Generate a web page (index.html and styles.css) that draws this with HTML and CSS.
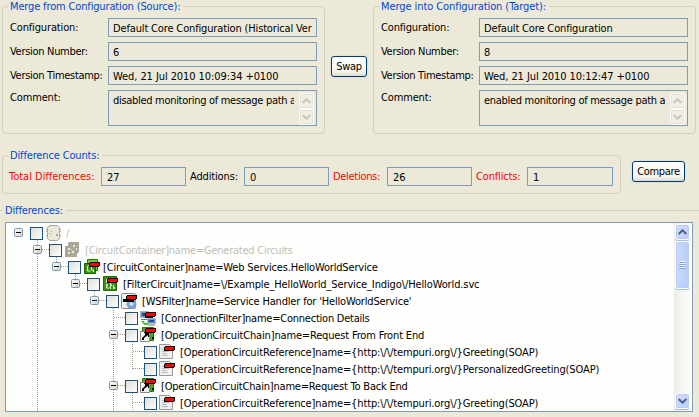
FILE: index.html
```
<!DOCTYPE html>
<html lang="en">
<head>
<meta charset="utf-8">
<title>Compare Configurations</title>
<link rel="stylesheet" href="styles.css">
</head>
<body>
<svg width="0" height="0" class="defs">
  <defs>
    <linearGradient id="face" x1="0" y1="0" x2="1" y2="1"><stop offset="0" stop-color="#fff"/><stop offset="1" stop-color="#d3cfc2"/></linearGradient>
    <linearGradient id="box" x1="0" y1="0" x2="1" y2="1"><stop offset="0" stop-color="#dcdcd7"/><stop offset="1" stop-color="#fff"/></linearGradient>
    <symbol id="minus" viewBox="0 0 9 9"><rect x=".5" y=".5" width="8" height="8" rx="1" fill="url(#face)" stroke="#7898b5"/><path d="M2 4.5h5" stroke="#000"/></symbol>
    <symbol id="check" viewBox="0 0 13 13"><rect x=".5" y=".5" width="12" height="12" fill="url(#box)" stroke="#1c5180"/></symbol>
    <symbol id="bar" viewBox="0 0 11 5"><path d="M1 0h10v4h-1v1h-10v-4h1z" fill="#000"/><path d="M1 1h9v3h-9z" fill="#f00"/></symbol>
    <symbol id="root" viewBox="0 0 16 16"><path d="M3.500 .5h8l2 2v11l-2 2h-8l-2-2v-11z" fill="#ece7d9" stroke="#aca899"/><path d="M0 4h1v1H0zM0 6h1v1H0zM0 10h1v1H0zM14 4h1v1h-1zM14 6h1v1h-1zM14 10h1v1h-1zM3 8h1v1H3zM5 6h1v1H5zM10 9h2v2h-2zM5 9h1v1H5z" fill="#aca899"/></symbol>
    <symbol id="dim" viewBox="0 0 16 16"><path d="M4 0h10v10l-2 2v3H0V4h3V1z" fill="#aca899"/><path d="M3 6h2v2H3zM8 3h2v2H8zM3 10h2v2H3zM7 9h2v2H7zM11 6h1v2h-1zM6 7h1v1H6z" fill="#ece9d8"/></symbol>
    <symbol id="circuits" viewBox="0 0 16 16"><path d="M3.500 .5h10v11h-10z" fill="#66cf28" stroke="#277900"/><path d="M.5 4.500h11v10H.5z" fill="#399116" stroke="#176000"/><path d="M3.500 7v5h3M7.500 8v3h2v2M4 6.500h2" fill="none" stroke="#d6f1c7"/><use href="#bar" x="5" y="3" width="11" height="5"/></symbol>
    <symbol id="circuit" viewBox="0 0 16 16"><path d="M.5 .5h13v14H.5z" fill="#3a8f16" stroke="#226900"/><path d="M3.500 4v3M3.500 9v3h3M7.500 5v8M10.500 9v4" fill="none" stroke="#d6f1c7"/><path d="M3 3h2v2H3zM3 8h2v2H3zM7 8h2v2H7zM10 11h2v2h-2z" fill="#c4e9ae"/><use href="#bar" x="4" y="2" width="11" height="5"/></symbol>
    <symbol id="ws" viewBox="0 0 16 16"><rect x=".5" y=".5" width="14" height="15" rx="1" fill="#eee" stroke="#888"/><path d="M3 3h8v3H3z" fill="#fff"/><circle cx="10.500" cy="11" r="4.500" fill="#7da7df" stroke="#6d93cc" stroke-dasharray="2 1"/><circle cx="10.500" cy="11" r="1.800" fill="#d7e7fa"/><path d="M2 6h11v3H2z" fill="#000"/><use href="#bar" x="5" y="2" width="11" height="5"/></symbol>
    <symbol id="conn" viewBox="0 0 16 16"><path d="M.5 1.500h8v6h-8zM7.500 8.500h8v5h-8z" fill="#629bdc" stroke="#aab2bb"/><path d="M2 3h4v3H2zM9 10h5v2H9z" fill="#294a93"/><path d="M1 9.500h6M8 15h7" fill="none" stroke="#6e7a82"/><path d="M1 11l3 4h4v-2H5l-1-2z" fill="#4ac733"/><path d="M5 6h8v2H5z" fill="#111"/><use href="#bar" x="5" y="2" width="11" height="5"/></symbol>
    <symbol id="chain" viewBox="0 0 16 16"><path d="M2.500 .5h11v13h-11z" fill="#4b9d27" stroke="#287400"/><path d="M.5 4.500h9v10h-9z" fill="#f2f2f2" stroke="#888"/><path d="M2 13v-2l3-3V6H4V5h5v5H8V8l-4 3v2zM12 10h2v2h-2z" fill="#000"/><use href="#bar" x="5" y="1" width="11" height="5"/></symbol>
    <symbol id="ref" viewBox="0 0 16 16"><path d="M.5 .5h10l3 3v11H.5z" fill="#f0f0ef" stroke="#999"/><path d="M3 5.500h5M3 7.500h7M3 9.500h5M3 11.500h6" stroke="#bbb"/><use href="#bar" x="5" y="2" width="11" height="5"/></symbol>
    <symbol id="up" viewBox="0 0 9 6"><path d="M.7 5L4.500 1.300 8.300 5" fill="none" stroke="currentColor" stroke-width="2"/></symbol>
    <symbol id="down" viewBox="0 0 9 6"><path d="M.7 1L4.500 4.700 8.300 1" fill="none" stroke="currentColor" stroke-width="2"/></symbol>
  </defs>
</svg>
<main>
  <section class="merge">
    <fieldset class="group config">
      <legend>Merge from Configuration (Source):</legend>
      <label>Configuration:</label><div class="field">Default Core Configuration (Historical Ver</div>
      <label class="tight">Version Number:</label><div class="field">6</div>
      <label class="tight">Version Timestamp:</label><div class="field date">Wed, 21 Jul 2010 10:09:34 +0100</div>
      <label class="top">Comment:</label>
      <div class="field area"><span>disabled monitoring of message path a</span><div class="mini"><i><svg><use href="#up"/></svg></i><i><svg><use href="#down"/></svg></i></div></div>
    </fieldset>
    <button class="swap">Swap</button>
    <fieldset class="group config">
      <legend class="wide">Merge into Configuration (Target):</legend>
      <label>Configuration:</label><div class="field">Default Core Configuration</div>
      <label class="tight">Version Number:</label><div class="field">8</div>
      <label class="tight">Version Timestamp:</label><div class="field date">Wed, 21 Jul 2010 10:12:47 +0100</div>
      <label class="top">Comment:</label>
      <div class="field area"><span>enabled monitoring of message path a</span><div class="mini"><i><svg><use href="#up"/></svg></i><i><svg><use href="#down"/></svg></i></div></div>
    </fieldset>
  </section>
  <section class="summary">
    <fieldset class="group counts">
      <legend>Difference Counts:</legend>
      <label class="red total">Total Differences:</label><div class="field">27</div>
      <label>Additions:</label><div class="field">0</div>
      <label class="red tight">Deletions:</label><div class="field">26</div>
      <label class="red">Conflicts:</label><div class="field">1</div>
    </fieldset>
    <button class="compare">Compare</button>
  </section>
  <fieldset class="diffs">
    <legend>Differences:</legend>
    <div class="tree">
      <svg class="lines" width="180" height="188"><path d="M31.500 17V188M50.500 34V47M69.500 51V64M88.500 68V81M107.500 85V188M126.500 119V146M126.500 170V188M36 26.500H43M55 43.500H62M74 60.500H81M93 77.500H100M108 94.500H119M112 111.500H119M127 128.500H138M127 145.500H138M112 162.500H119M127 179.500H138"/></svg>
      <div class="rows">
        <div class="row d0"><svg class="exp"><use href="#minus"/></svg><svg class="chk"><use href="#check"/></svg><svg class="ico"><use href="#root"/></svg><span class="dim">/</span></div>
        <div class="row d1"><svg class="exp"><use href="#minus"/></svg><svg class="chk"><use href="#check"/></svg><svg class="ico"><use href="#dim"/></svg><span class="dim">[CircuitContainer]name=Generated Circuits</span></div>
        <div class="row d2"><svg class="exp"><use href="#minus"/></svg><svg class="chk"><use href="#check"/></svg><svg class="ico"><use href="#circuits"/></svg><span>[CircuitContainer]name=Web Services.HelloWorldService</span></div>
        <div class="row d3"><svg class="exp"><use href="#minus"/></svg><svg class="chk"><use href="#check"/></svg><svg class="ico"><use href="#circuit"/></svg><span>[FilterCircuit]name=\/Example_HelloWorld_Service_Indigo\/HelloWorld.svc</span></div>
        <div class="row d4"><svg class="exp"><use href="#minus"/></svg><svg class="chk"><use href="#check"/></svg><svg class="ico"><use href="#ws"/></svg><span>[WSFilter]name=Service Handler for 'HelloWorldService'</span></div>
        <div class="row d5 leaf"><svg class="chk"><use href="#check"/></svg><svg class="ico"><use href="#conn"/></svg><span>[ConnectionFilter]name=Connection Details</span></div>
        <div class="row d5"><svg class="exp"><use href="#minus"/></svg><svg class="chk"><use href="#check"/></svg><svg class="ico"><use href="#chain"/></svg><span>[OperationCircuitChain]name=Request From Front End</span></div>
        <div class="row d6 leaf"><svg class="chk"><use href="#check"/></svg><svg class="ico"><use href="#ref"/></svg><span>[OperationCircuitReference]name={http:\/\/tempuri.org\/}Greeting(SOAP)</span></div>
        <div class="row d6 leaf"><svg class="chk"><use href="#check"/></svg><svg class="ico"><use href="#ref"/></svg><span>[OperationCircuitReference]name={http:\/\/tempuri.org\/}PersonalizedGreeting(SOAP)</span></div>
        <div class="row d5"><svg class="exp"><use href="#minus"/></svg><svg class="chk"><use href="#check"/></svg><svg class="ico"><use href="#chain"/></svg><span class="back">[OperationCircuitChain]name=Request To Back End</span></div>
        <div class="row d6 leaf"><svg class="chk"><use href="#check"/></svg><svg class="ico"><use href="#ref"/></svg><span>[OperationCircuitReference]name={http:\/\/tempuri.org\/}Greeting(SOAP)</span></div>
      </div>
      <div class="scroll">
        <i class="arrow"><svg><use href="#up"/></svg></i>
        <i class="thumb"><b></b></i>
        <i class="arrow end"><svg><use href="#down"/></svg></i>
      </div>
    </div>
  </fieldset>
</main>
</body>
</html>
```
FILE: styles.css
```
* { box-sizing: border-box; }
body { margin: 0; width: 699px; height: 417px; overflow: hidden; background: #ece9d8; color: #000; font: 11px/13px "DejaVu Sans Condensed", "DejaVu Sans", sans-serif; font-stretch: condensed; letter-spacing: -0.15px; white-space: nowrap; }
.defs { position: absolute; }
main { display: flex; flex-direction: column; height: 417px; }
fieldset { margin: 0; padding: 0; min-width: 0; border: 1px solid #d0d0bf; }
legend { color: #0046d5; margin-left: -2px; padding: 0 3px 0 2px; height: 13px; }
.wide { letter-spacing: -0.08px; }
svg { display: block; flex: none; }

.merge { display: flex; height: 149px; padding-left: 2px; }
.group { border-radius: 4px; }
.config { display: grid; grid-template-columns: 98px 209px; grid-template-rows: 19px 19px 19px 36px; row-gap: 5px; align-items: center; align-content: start; width: 323px; height: 134px; padding: 5px 0 0 7px; }
.tight { letter-spacing: -0.3px; }
.date { letter-spacing: -0.08px; }
.top { align-self: start; margin-top: 1px; }
.field { height: 19px; border: 1px solid #7f9db9; padding: 3px 4px 0 4px; line-height: 13px; overflow: hidden; }
.area { height: 36px; display: flex; padding: 3px 2px 0 4px; letter-spacing: -0.3px; }
.area span { width: 181px; overflow: hidden; }
.mini { display: flex; flex-direction: column; margin: -1px 0 0 auto; }
.mini i { display: grid; place-items: center; width: 15px; height: 16px; background: #f1efe5; border: 1px solid #fff; border-radius: 2px; box-shadow: inset 0 0 0 1px #e5e2d5, 0 1px #ddd9c9; color: #c9c7ba; }
.mini svg, .arrow svg { width: 9px; height: 6px; }

button { border: 1px solid #003c74; border-radius: 3px; padding: 0; height: 21px; font: inherit; letter-spacing: -0.35px; color: #000; background: linear-gradient(#fff, #f4f3ee 80%, #dcd8cb); box-shadow: 0 0 0 1px #e4e0ce; }
.swap { width: 36px; margin: 56px 6px 0; }
.compare { width: 53px; margin: 12px 0 0 11px; }

.summary { display: flex; height: 55px; padding-left: 2px; }
.counts { display: grid; grid-template-columns: 91px 85px 58px 85px 58px 85px 55px 86px; align-items: start; width: 619px; height: 45px; padding: 5px 0 0 7px; }
.counts label { margin-top: 3px; }
.counts label:nth-of-type(n+2) { padding-left: 4px; }
.counts .total { letter-spacing: 0; margin-left: -1px; }
.counts .field { padding-left: 5px; }
.red { color: #f00; }

.diffs { border-width: 1px 0 0; width: 699px; height: 213px; padding: 5px 0 0 5px; }
.tree { position: relative; display: flex; width: 688px; height: 190px; border: 1px solid #7f9db9; background: #fefefc; overflow: hidden; }
.lines { position: absolute; left: 0; top: 0; fill: none; stroke: #a09e90; stroke-dasharray: 1 1; }
.rows { flex: 1; padding-top: 2px; position: relative; overflow: hidden; letter-spacing: -0.14px; }
.row { display: flex; align-items: center; height: 17px; }
.exp { width: 9px; height: 9px; margin: 0 7px 2px 0; }
.chk { width: 13px; height: 13px; margin: 0 3px 0 0; }
.ico { width: 16px; height: 16px; margin: 0 4px 1px 0; }
.d4 .ico, .d5 .ico, .d6 .ico { margin: 0 5px 1px -1px; }
.d0 { padding-left: 8px; }
.d1 { padding-left: 27px; letter-spacing: -0.23px; }
.d2 { padding-left: 46px; letter-spacing: -0.17px; }
.d2 span { margin-left: -1px; }
.d3 { padding-left: 65px; letter-spacing: -0.12px; }
.d4 { padding-left: 84px; letter-spacing: -0.17px; }
.d5 { padding-left: 103px; letter-spacing: -0.16px; }
.d5.leaf { padding-left: 119px; letter-spacing: -0.23px; }
.d6.leaf { padding-left: 138px; letter-spacing: -0.12px; }
.back { letter-spacing: -0.2px; }
.dim { color: #c0c0b8; }
.scroll { display: flex; flex-direction: column; width: 18px; padding-top: 1px; background: linear-gradient(90deg, #eeede5, #f3f3ef 30%, #fefefb); }
.arrow, .thumb { display: grid; place-items: center; width: 15px; margin: 0 0 1px 1px; border: 1px solid #fff; border-radius: 3px; background: linear-gradient(135deg, #d5e0ff, #b8cbf8); box-shadow: inset 0 0 0 1px #b9cafa, 0 1px #a3bde0; color: #4d6185; }
.arrow { height: 16px; }
.thumb { height: 48px; background: linear-gradient(90deg, #c9d8ff, #b9cbf9); }
.thumb b { width: 7px; height: 8px; background: repeating-linear-gradient(#eef4ff 0 1px, #8ca9e5 1px 2px); }
.arrow.end { margin: auto 0 2px 1px; }
```
